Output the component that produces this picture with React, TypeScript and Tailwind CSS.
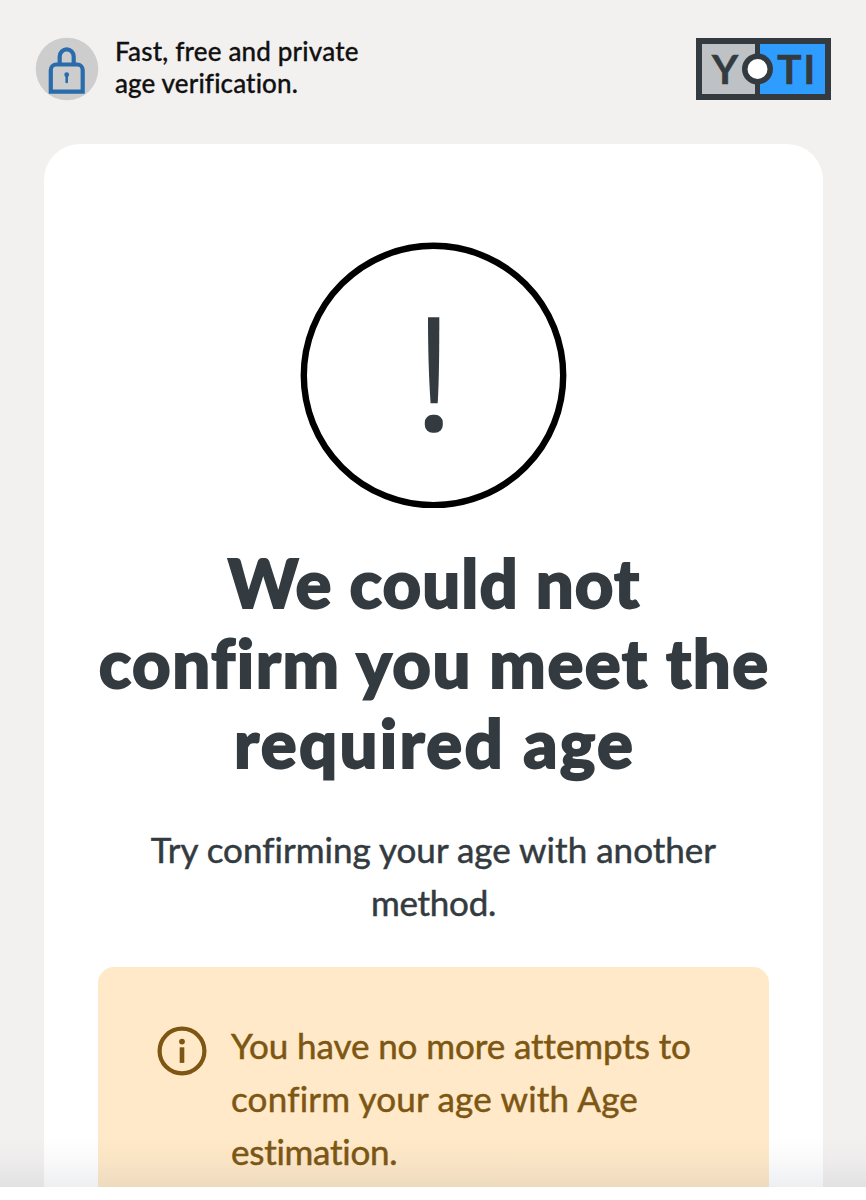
import type { ReactNode } from "react"

function Line({ className, children }: { className: string; children: ReactNode }) {
  return (
    <span className="block whitespace-nowrap">
      <span className={className}>{children}</span>
    </span>
  )
}

function LockIcon() {
  return (
    <svg width="64" height="64" viewBox="0 0 64 64" fill="none" className="shrink-0">
      <circle cx="32" cy="32" r="31.3" fill="#cdcdcd" />
      <path d="M15.8 54.6V33a5.5 5.5 0 0 1 5.5-5.5h20.9a5.5 5.5 0 0 1 5.5 5.5v21.6z" stroke="#2a6cab" strokeWidth="4.2" />
      <path d="M24.7 27v-7.6a7 7 0 0 1 14 0V27" stroke="#2a6cab" strokeWidth="4.2" />
      <circle cx="31.7" cy="37.7" r="2.4" fill="#2a6cab" />
      <path d="M31.7 38v7" stroke="#2a6cab" strokeWidth="2.6" strokeLinecap="round" />
    </svg>
  )
}

function YotiLogo() {
  return (
    <svg width="135" height="62" viewBox="0 0 135 62" className="mt-px shrink-0">
      <rect width="135" height="62" fill="#333b40" />
      <rect x="6" y="6" width="53" height="50" fill="#bfc2c5" />
      <rect x="64" y="6" width="65" height="50" fill="#2e9dff" />
      <circle cx="61.5" cy="31" r="15.5" fill="#333b40" />
      <circle cx="61.5" cy="31" r="10" fill="#fff" />
      <g
        fill="#333b40"
        stroke="#333b40"
        strokeWidth="0.4"
        fontFamily="Lato, sans-serif"
        fontWeight="700"
        fontSize="41"
        textAnchor="middle"
      >
        <text x="29" y="45.6">Y</text>
        <text x="93.2" y="45.6">T</text>
        <text x="113.3" y="45.6">I</text>
      </g>
    </svg>
  )
}

function AlertIcon() {
  return (
    <svg width="267" height="266" viewBox="0 0 267 266" className="mx-auto block">
      <circle cx="133.5" cy="133.5" r="129.7" fill="none" stroke="#000" strokeWidth="6.4" />
      <path d="M128 75.3h11.3c0 32-.2 62-1.6 86h-7.1c-1.8-25-2.6-54-2.6-86z" fill="#333b40" />
      <rect x="124.8" y="172.8" width="18" height="18" rx="7.8" fill="#333b40" />
    </svg>
  )
}

function InfoIcon() {
  return (
    <svg width="50" height="50" viewBox="0 0 50 50" className="shrink-0">
      <circle cx="25" cy="25" r="22.4" fill="none" stroke="#7d5613" strokeWidth="4.2" />
      <circle cx="25" cy="15.6" r="2.9" fill="#7d5613" />
      <path d="M25 21.3v15.6" stroke="#7d5613" strokeWidth="4.6" />
    </svg>
  )
}

export default function App() {
  return (
    <div className="relative flex h-[1200px] w-[866px] flex-col overflow-hidden bg-[#f3f1f0] font-['Lato',sans-serif] [font-variant-ligatures:none]">
      <header className="flex h-36 shrink-0 items-start justify-between pt-[37px] pr-[35px] pl-[35px]">
        <div className="flex">
          <LockIcon />
          <p className="-mt-px ml-4 text-[26px] leading-[31.5px] font-medium text-[#111] [-webkit-text-stroke:0.3px]">
            <Line className="tracking-[0.18px]">Fast, free and private</Line>
            <Line className="tracking-[0.13px]">age verification.</Line>
          </p>
        </div>
        <YotiLogo />
      </header>

      <main className="mr-[43px] ml-[44px] flex-1 rounded-t-[36px] bg-white px-[54px] pt-[98px]">
        <AlertIcon />
        <h1 className="mt-[34px] text-center text-[67px] leading-[80px] font-black text-[#333b40] [-webkit-text-stroke:1.8px]">
          <Line className="-mr-[1.1px] tracking-[1.1px]">We could not</Line>
          <Line className="-mr-[1.5px] tracking-[1.5px]">confirm you meet the</Line>
          <Line className="-mr-[2.3px] tracking-[2.3px]">required age</Line>
        </h1>
        <p className="mt-[41px] text-center text-[35px] leading-[53.3px] text-[#333b40] [-webkit-text-stroke:0.5px]">
          <Line className="tracking-[0.03px]">Try confirming your age with another</Line>
          <Line className="tracking-[-0.3px]">method.</Line>
        </p>
        <div className="mt-[37px] flex h-[300px] rounded-2xl bg-[#ffe9c8] pt-[52px] pl-[59px] text-[#7d5613]">
          <div className="mt-[7px]">
            <InfoIcon />
          </div>
          <p className="ml-6 text-[35px] leading-[53.3px] [-webkit-text-stroke:0.5px]">
            <Line className="tracking-[-0.08px]">You have no more attempts to</Line>
            <Line className="tracking-[0.22px]">confirm your age with Age</Line>
            <Line className="tracking-[-0.25px]">estimation.</Line>
          </p>
        </div>
      </main>

      {/* fade above the bottom bar */}
      <div className="absolute inset-x-0 bottom-0">
        <div className="h-[50px] bg-linear-to-b from-transparent via-[#28324b]/3 to-[#28324b]/8" />
        <div className="h-[13px] bg-white" />
      </div>
    </div>
  )
}
